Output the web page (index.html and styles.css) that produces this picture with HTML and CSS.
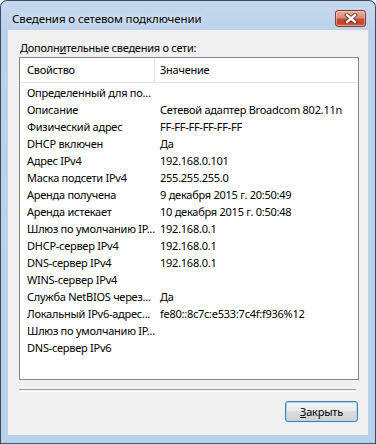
FILE: index.html
```html
<!DOCTYPE html>
<html lang="ru">
<head>
<meta charset="utf-8">
<title>Сведения о сетевом подключении</title>
<link rel="stylesheet" href="styles.css">
</head>
<body>
<div class="window">
  <div class="titlebar">
    <span class="title">Сведения о сетевом подключении</span>
    <span class="close">
      <svg width="14" height="11" viewBox="0 0 14 11">
        <path d="M3 2 L11 9 M11 2 L3 9" stroke="#4a1d16" stroke-width="4.2" stroke-linecap="square" fill="none" opacity="0.75"/>
        <path d="M3 2 L11 9 M11 2 L3 9" stroke="#ffffff" stroke-width="2.4" stroke-linecap="square" fill="none"/>
      </svg>
    </span>
  </div>
  <div class="client">
    <div class="label">Дополн<u>и</u>тельные сведения о сети:</div>
    <div class="listbox">
      <div class="header">
        <div class="hcell c1">Свойство</div>
        <div class="hcell c2">Значение</div>
      </div>
      <div class="rows">
        <div class="row"><span class="c1">Определенный для по...</span><span class="c2"></span></div>
        <div class="row"><span class="c1">Описание</span><span class="c2">Сетевой адаптер Broadcom 802.11n</span></div>
        <div class="row"><span class="c1">Физический адрес</span><span class="c2">FF-FF-FF-FF-FF-FF</span></div>
        <div class="row"><span class="c1">DHCP включен</span><span class="c2">Да</span></div>
        <div class="row"><span class="c1">Адрес IPv4</span><span class="c2">192.168.0.101</span></div>
        <div class="row"><span class="c1">Маска подсети IPv4</span><span class="c2">255.255.255.0</span></div>
        <div class="row"><span class="c1">Аренда получена</span><span class="c2">9 декабря 2015 г. 20:50:49</span></div>
        <div class="row"><span class="c1">Аренда истекает</span><span class="c2">10 декабря 2015 г. 0:50:48</span></div>
        <div class="row"><span class="c1">Шлюз по умолчанию IP...</span><span class="c2">192.168.0.1</span></div>
        <div class="row"><span class="c1">DHCP-сервер IPv4</span><span class="c2">192.168.0.1</span></div>
        <div class="row"><span class="c1">DNS-сервер IPv4</span><span class="c2">192.168.0.1</span></div>
        <div class="row"><span class="c1">WINS-сервер IPv4</span><span class="c2"></span></div>
        <div class="row"><span class="c1">Служба NetBIOS через...</span><span class="c2">Да</span></div>
        <div class="row"><span class="c1">Локальный IPv6-адрес...</span><span class="c2">fe80::8c7c:e533:7c4f:f936%12</span></div>
        <div class="row"><span class="c1">Шлюз по умолчанию IP...</span><span class="c2"></span></div>
        <div class="row"><span class="c1">DNS-сервер IPv6</span><span class="c2"></span></div>
      </div>
    </div>
    <div class="separator"></div>
    <div class="buttons">
      <button class="btn"><u>З</u>акрыть</button>
    </div>
  </div>
</div>
</body>
</html>
```
FILE: styles.css
```css
html, body {
  margin: 0;
  padding: 0;
  background: #ffffff;
}
body {
  font-family: "Noto Sans", "DejaVu Sans", sans-serif;
  font-size: 11px;
  letter-spacing: -0.25px;
  color: #000;
}
.window {
  width: 376px;
  height: 444px;
  box-sizing: border-box;
  border: 1px solid #3e4a58;
  border-bottom-color: #2a6a78;
  border-radius: 7px 7px 0 0;
  background: linear-gradient(180deg, #c5d8ee 0px, #bcd2eb 30px, #b9d1ea 100%);
  display: flex;
  flex-direction: column;
  overflow: hidden;
}
.titlebar {
  height: 29px;
  display: flex;
  align-items: flex-start;
  flex: none;
}
.title {
  margin-top: 10px;
  margin-left: 11px;
  line-height: 16px;
  font-size: 11.5px;
  letter-spacing: -0.1px;
  color: #000;
  text-shadow: 0 0 6px rgba(255,255,255,0.9);
}
.close {
  margin-left: auto;
  margin-right: 9px;
  margin-top: 9px;
  width: 31px;
  height: 17px;
  box-sizing: border-box;
  border: 1px solid #8a3b2e;
  border-radius: 3px;
  background: linear-gradient(180deg, #e8b0a3 0%, #d98a78 45%, #c7503a 55%, #c2432c 80%, #d56a4f 100%);
  box-shadow: inset 0 0 0 1px rgba(255,220,210,0.45);
  display: flex;
  align-items: center;
  justify-content: center;
}
.close svg { display: block; }
.client {
  flex: 1;
  margin: 0 7px 8px 7px;
  background: #f0f0f0;
  display: flex;
  flex-direction: column;
  padding: 0 9px 0 11px;
}
.label {
  margin-top: 10px;
  margin-left: 1px;
  line-height: 16px;
  height: 17px;
}
.listbox {
  height: 323px;
  box-sizing: border-box;
  border: 1px solid #828790;
  background: #fff;
  display: flex;
  flex-direction: column;
}
.header {
  height: 24px;
  border-bottom: 1px solid #e5e5e5;
  display: flex;
  flex: none;
}
.hcell {
  line-height: 24px;
}
.hcell.c1 {
  width: 127px;
  padding-left: 7px;
  border-right: 1px solid #e5e5e5;
}
.hcell.c2 {
  padding-left: 5px;
}
.rows {
  padding-top: 1px;
}
.row {
  display: flex;
  height: 17px;
  line-height: 17px;
  white-space: nowrap;
}
.row .c1 {
  width: 133px;
  padding-left: 7px;
  flex: none;
  overflow: hidden;
}
.separator {
  margin-top: 9px;
  margin-right: 3px;
  height: 1px;
  border-top: 1px solid #a0a0a0;
  border-bottom: 1px solid #ffffff;
}
.buttons {
  display: flex;
  justify-content: flex-end;
  margin-top: 9px;
  margin-right: 1px;
}
.btn {
  width: 73px;
  height: 21px;
  box-sizing: border-box;
  border: 1px solid #3c7fb1;
  border-radius: 3px;
  background: linear-gradient(180deg, #f4f4f4 0%, #ececec 49%, #dedede 50%, #d2d2d2 100%);
  box-shadow: inset 0 0 0 1px #a8dcf6;
  font-family: "Noto Sans", "DejaVu Sans", sans-serif;
  font-size: 11px;
  letter-spacing: -0.2px;
  color: #000;
  padding: 0;
  line-height: 17px;
}
```
